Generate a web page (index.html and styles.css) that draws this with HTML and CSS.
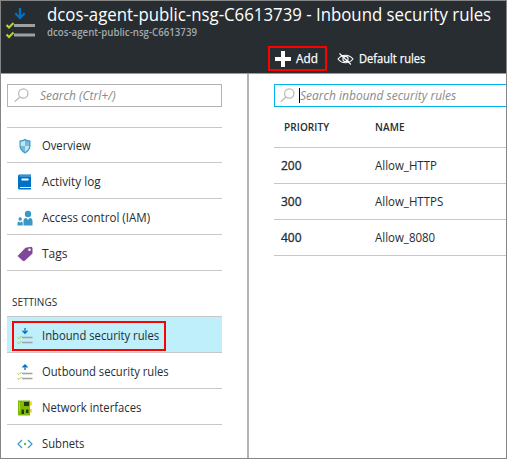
FILE: index.html
```
<!DOCTYPE html>
<html lang="en">
<head>
<meta charset="utf-8">
<title>Inbound security rules</title>
<link rel="stylesheet" href="styles.css">
</head>
<body>
<div class="window">
  <header class="header">
    <div class="heading">
      <svg class="heading-icon" width="30" height="32" viewBox="0 0 30 32" fill="none"><path d="M14 0v10M9.300 5.300L14 10l4.700-4.700" stroke="#0072c6" stroke-width="2.200"/><path d="M8 17.500h21M8 27h21" stroke="#a0a1a2" stroke-width="3"/><path d="M.5 17l2.500 2.500L7.500 15M.5 26.500L3 29l4.500-4.500" stroke="#b8d432" stroke-width="2"/></svg>
      <div class="titles">
        <h1><span class="t-title">dcos-agent-public-nsg-C6613739 - Inbound security rules</span></h1>
        <p><span class="t-sub">dcos-agent-public-nsg-C6613739</span></p>
      </div>
    </div>
    <div class="toolbar">
      <button class="add"><svg width="16" height="16" viewBox="0 0 16 16"><path d="M6 0h4v6h6v4h-6v6H6v-6H0V6h6z" fill="#fff"/></svg><span class="t-add">Add</span></button>
      <button class="defaults"><svg width="17" height="14" viewBox="0 0 17 14" fill="none" stroke="#fff" stroke-width="1.100"><path d="M1 7c4-5 11-5 15 0-4 5-11 5-15 0zM2.500 1.500l11.500 11"/><circle cx="8.500" cy="7" r="2.600"/></svg><span class="t-def">Default rules</span></button>
    </div>
  </header>
  <main class="body">
    <nav class="sidebar">
      <div class="search"><svg width="15" height="15" viewBox="0 0 15 15" fill="none" stroke="#b9b9b9" stroke-width="1.200"><circle cx="9.300" cy="5.500" r="4.700"/><path d="M6 9L.7 13.800"/></svg><span>Search (Ctrl+/)</span></div>
      <ul class="menu general">
        <li><svg width="16" height="16" viewBox="0 0 16 16"><path d="M2.500 2.500Q6 2.500 8 .8q2 1.700 5.500 1.700V8c0 3.500-3 6-5.500 7.500C5.500 14 2.500 11.500 2.500 8z" fill="#3f9bc6"/><path d="M3.700 3.700Q6.500 3.500 8 2.300V8H3.700zM8 8h4.300c0 2.500-2 4.600-4.300 6z" fill="#c3e4f1"/><path d="M8 2.300q1.500 1.200 4.300 1.400V8H8zM3.700 8H8v6c-2.300-1.400-4.300-3.500-4.300-6z" fill="#76bcd9"/></svg><span class="narrow">Overview</span></li>
        <li><svg width="16" height="16" viewBox="0 0 16 16"><path d="M1 2q0-1.500 1.500-1.500H14V13H3v1h11v1.500H2.500Q1 15.500 1 14z" fill="#0072c6"/><path d="M2.500 2H14" stroke="#6eb1e2"/><path d="M4.500 4.500h7v2h-7z" fill="#fff"/></svg><span class="t-act">Activity log</span></li>
        <li><svg width="16" height="16" viewBox="0 0 16 16" fill="#3999c6"><circle cx="11" cy="4" r="3.200"/><path d="M6.500 15.500V11q0-3 3-3L11 10l1.500-2q3 0 3 3v4.500z"/><circle cx="3.200" cy="9" r="1.700"/><path d="M.5 15.500V13q0-1.500 1.500-1.500l1.200 1.200 1.200-1.200q1.300 0 1.300 1.500v2.500z"/></svg><span class="t-iam">Access control (IAM)</span></li>
        <li><svg width="16" height="16" viewBox="0 0 16 16"><path d="M.5 10l8-8.300L14.500.8 15.500 2v5.500l-8 7.500H6z" fill="#804998"/><circle cx="12.500" cy="3.800" r="1.300" fill="#fff"/></svg><span>Tags</span></li>
      </ul>
      <h2>SETTINGS</h2>
      <ul class="menu settings">
        <li class="active"><svg width="16" height="16" viewBox="0 0 16 16" fill="none"><path d="M8 0v5M5.500 2.800L8 5.300l2.500-2.500" stroke="#0072c6" stroke-width="1.300"/><path d="M5 9.500h10.500M5 14.500h10.500" stroke="#a0a1a2" stroke-width="1.300"/><path d="M.5 9.500l1.500 1L4.500 8M.5 14.500l1.500 1L4.500 13" stroke="#a9d02a"/></svg><span class="narrow">Inbound security rules</span><i class="mark"></i></li>
        <li><svg width="16" height="16" viewBox="0 0 16 16" fill="none"><path d="M8 6V1M5.500 3.500L8 1l2.500 2.500" stroke="#0072c6" stroke-width="1.300"/><path d="M5 9.500h10.500M5 14.500h10.500" stroke="#a0a1a2" stroke-width="1.300"/><path d="M.5 9.500l1.500 1L4.500 8M.5 14.500l1.500 1L4.500 13" stroke="#a9d02a"/></svg><span class="narrow">Outbound security rules</span></li>
        <li><svg width="16" height="16" viewBox="0 0 16 16"><path d="M1 .5h12v15H1z" fill="#7fba00"/><path d="M13 1.500h1.800v4H13zM13 9h1.800v3.500H13z" fill="#fcd116"/><path d="M7 2h5v4H7zM4.500 9.500h2.500V14H4.500zM9 9.500h2.500V13H9z" fill="#1e3c14"/><path d="M2.500 2v9" stroke="#b8d432"/></svg><span class="narrow">Network interfaces</span></li>
        <li><svg width="16" height="16" viewBox="0 0 16 16" fill="none"><path d="M5 4L1 8l4 4M11 4l4 4-4 4" stroke="#3999c6" stroke-width="1.200"/><circle cx="8" cy="8" r="1.200" fill="#7fba00"/></svg><span class="narrow">Subnets</span></li>
      </ul>
    </nav>
    <section class="content">
      <div class="search focused"><svg width="15" height="15" viewBox="0 0 15 15" fill="none" stroke="#b9b9b9" stroke-width="1.200"><circle cx="9.300" cy="5.500" r="4.700"/><path d="M6 9L.7 13.800"/></svg><i class="caret"></i><span>Search inbound security rules</span></div>
      <div class="row head"><b>PRIORITY</b><b>NAME</b></div>
      <div class="row"><b>200</b><span class="name">Allow_HTTP</span></div>
      <div class="row"><b>300</b><span class="name">Allow_HTTPS</span></div>
      <div class="row"><b>400</b><span class="name">Allow_8080</span></div>
    </section>
  </main>
</div>
</body>
</html>
```
FILE: styles.css
```
* { box-sizing: border-box; }
body { margin: 0; font: 12px/18px "Open Sans", "Noto Sans", sans-serif; color: #252d31; }
h1, h2, p, ul { margin: 0; padding: 0; font-weight: 400; }
li { list-style: none; }
svg { display: block; flex: none; }
span { display: inline-block; white-space: nowrap; transform-origin: left center; }
button { background: none; border: 0; padding: 0; font: inherit; color: #fff; display: flex; align-items: center; }

.window { width: 507px; height: 459px; border: 1px solid #858585; display: flex; flex-direction: column; overflow: hidden; background: #fff; }
.header { height: 73px; flex: none; background: #272d31; border-bottom: 1px solid #999; }
.heading { display: flex; height: 44px; }
.heading-icon { margin: 7px 0 0 5px; }
.titles { margin-left: 11px; }
h1 { font-size: 18.5px; line-height: 25px; height: 25px; color: #fff; }
.titles p { font-size: 10px; line-height: 12px; color: #a5a8aa; font-weight: 600; }
.t-title { transform: scaleX(.908); }
.t-sub { transform: scaleX(.968); }
.toolbar { display: flex; padding-left: 267px; margin-top: 1px; }
.add { width: 59px; height: 25px; border: 2px solid #f00; padding-left: 5px; gap: 5px; -webkit-text-stroke: .25px; }
.defaults { margin-left: 10px; gap: 5px; -webkit-text-stroke: .25px; }
.t-add { transform: scaleX(.98); }
.t-def { transform: scaleX(.925); }

.body { display: flex; flex: 1; min-height: 0; }
.sidebar { width: 248px; flex: none; border-right: 2px solid #b2b2b2; padding: 10px 25px 0 6px; }
.search { height: 23px; border: 1px solid #b2b2b2; display: flex; align-items: center; padding-left: 6px; gap: 11px; color: #8a8a8a; font-style: italic; }
.general { margin-top: 20px; border-top: 1px solid #c8c8c8; }
.menu li { height: 36px; border-bottom: 1px solid #c8c8c8; display: flex; align-items: center; gap: 9px; padding: 2px 0 0 10px; position: relative; }
.general li:first-child { height: 35px; }
.narrow { transform: scaleX(.936); }
.t-act { transform: scaleX(.98); }
.t-iam { transform: scaleX(.965); }
h2 { height: 45px; padding: 22px 0 0 5px; font-size: 10px; }
.settings { border-top: 1px solid #c8c8c8; }
.menu .active { background: #beeffb; }
.mark { position: absolute; left: 5px; top: 4px; width: 154px; height: 30px; border: 2px solid #f00; }

.content { flex: 1; min-width: 0; padding: 10px 0 0 25px; }
.focused { border: 1px solid #00b4ec; border-right: 0; padding-left: 5px; gap: 4px; }
.caret { width: 1px; height: 15px; background: #000; margin-right: -4px; }
.row { height: 36px; border-bottom: 1px solid #c8c8c8; display: grid; grid-template-columns: 94px 1fr; padding-left: 7px; align-items: center; }
.head { height: 41px; grid-template-columns: 91px 1fr; padding-left: 10px; font-size: 10px; letter-spacing: .1px; }
.row b { font-weight: 400; -webkit-text-stroke: .3px; }
.head b { font-weight: 600; -webkit-text-stroke: 0; }
.name { transform: scaleX(.957); }
```
